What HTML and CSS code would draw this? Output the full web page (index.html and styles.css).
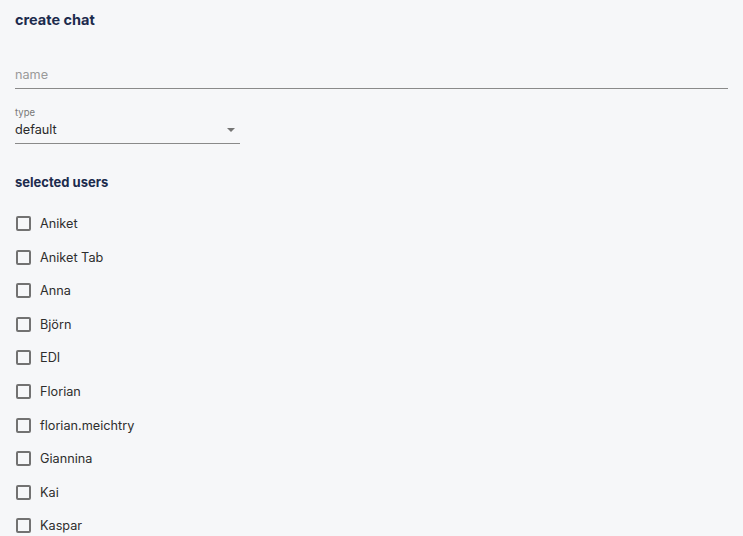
FILE: index.html
```html
<!DOCTYPE html>
<html lang="en">
<head>
    <meta charset="UTF-8">
    <meta name="viewport" content="width=device-width, initial-scale=1.0">
    <title>Create chat</title>
    <link rel="stylesheet" href="styles.css">
</head>
<body>
    <div class="page">
        <h2 class="title">create chat</h2>

        <div class="field field-name">
            <input class="text-input" type="text" placeholder="name">
        </div>

        <div class="field field-type">
            <label class="field-label">type</label>
            <div class="select">
                <span class="select-value">default</span>
                <span class="select-arrow"></span>
            </div>
        </div>

        <h3 class="subtitle">selected users</h3>

        <ul class="user-list">
            <li class="user"><span class="checkbox"></span>Aniket</li>
            <li class="user"><span class="checkbox"></span>Aniket Tab</li>
            <li class="user"><span class="checkbox"></span>Anna</li>
            <li class="user"><span class="checkbox"></span>Björn</li>
            <li class="user"><span class="checkbox"></span>EDI</li>
            <li class="user"><span class="checkbox"></span>Florian</li>
            <li class="user"><span class="checkbox"></span>florian.meichtry</li>
            <li class="user"><span class="checkbox"></span>Giannina</li>
            <li class="user"><span class="checkbox"></span>Kai</li>
            <li class="user"><span class="checkbox"></span>Kaspar</li>
        </ul>
    </div>
</body>
</html>
```

FILE: styles.css
```css
body, html {
    margin: 0;
    height: 100%;
    background-color: #f6f7f9;
    font-family: 'Inter', 'Roboto', sans-serif;
    overflow: hidden;
}

.page {
    padding: 11px 15px 0 15px;
}

.title {
    margin: 0;
    font-size: 14.5px;
    font-weight: 700;
    color: #1c2b4d;
    line-height: 18px;
}

.field-name {
    margin-top: 34px;
}

.text-input {
    width: 100%;
    box-sizing: border-box;
    border: none;
    border-bottom: 1px solid #8a8a8a;
    background: transparent;
    padding: 0 0 5px 0;
    font-family: inherit;
    font-size: 12.7px;
    line-height: 16px;
    color: #333;
    outline: none;
}

.text-input::placeholder {
    color: #9a9a9a;
}

.field-type {
    margin-top: 18px;
    width: 225px;
}

.field-label {
    display: block;
    font-size: 9.5px;
    line-height: 12px;
    color: #777;
}

.select {
    display: flex;
    align-items: center;
    justify-content: space-between;
    border-bottom: 1px solid #8a8a8a;
    padding: 3px 0 5px 0;
}

.select-value {
    font-size: 12.7px;
    line-height: 16px;
    color: #2a2a2a;
}

.select-arrow {
    width: 0;
    height: 0;
    border-left: 4px solid transparent;
    border-right: 4px solid transparent;
    border-top: 4px solid #757575;
    margin-right: 5px;
}

.subtitle {
    margin: 29px 0 0 0;
    font-size: 13px;
    font-weight: 700;
    color: #1c2b4d;
    line-height: 18px;
}

.user-list {
    list-style: none;
    margin: 16px 0 0 0;
    padding: 0;
}

.user {
    display: flex;
    align-items: center;
    height: 33.55px;
    font-size: 12.7px;
    color: #2e2e2e;
}

.checkbox {
    width: 11px;
    height: 11px;
    border: 2px solid #727272;
    border-radius: 2px;
    margin: 0 9px 0 1px;
}
```
